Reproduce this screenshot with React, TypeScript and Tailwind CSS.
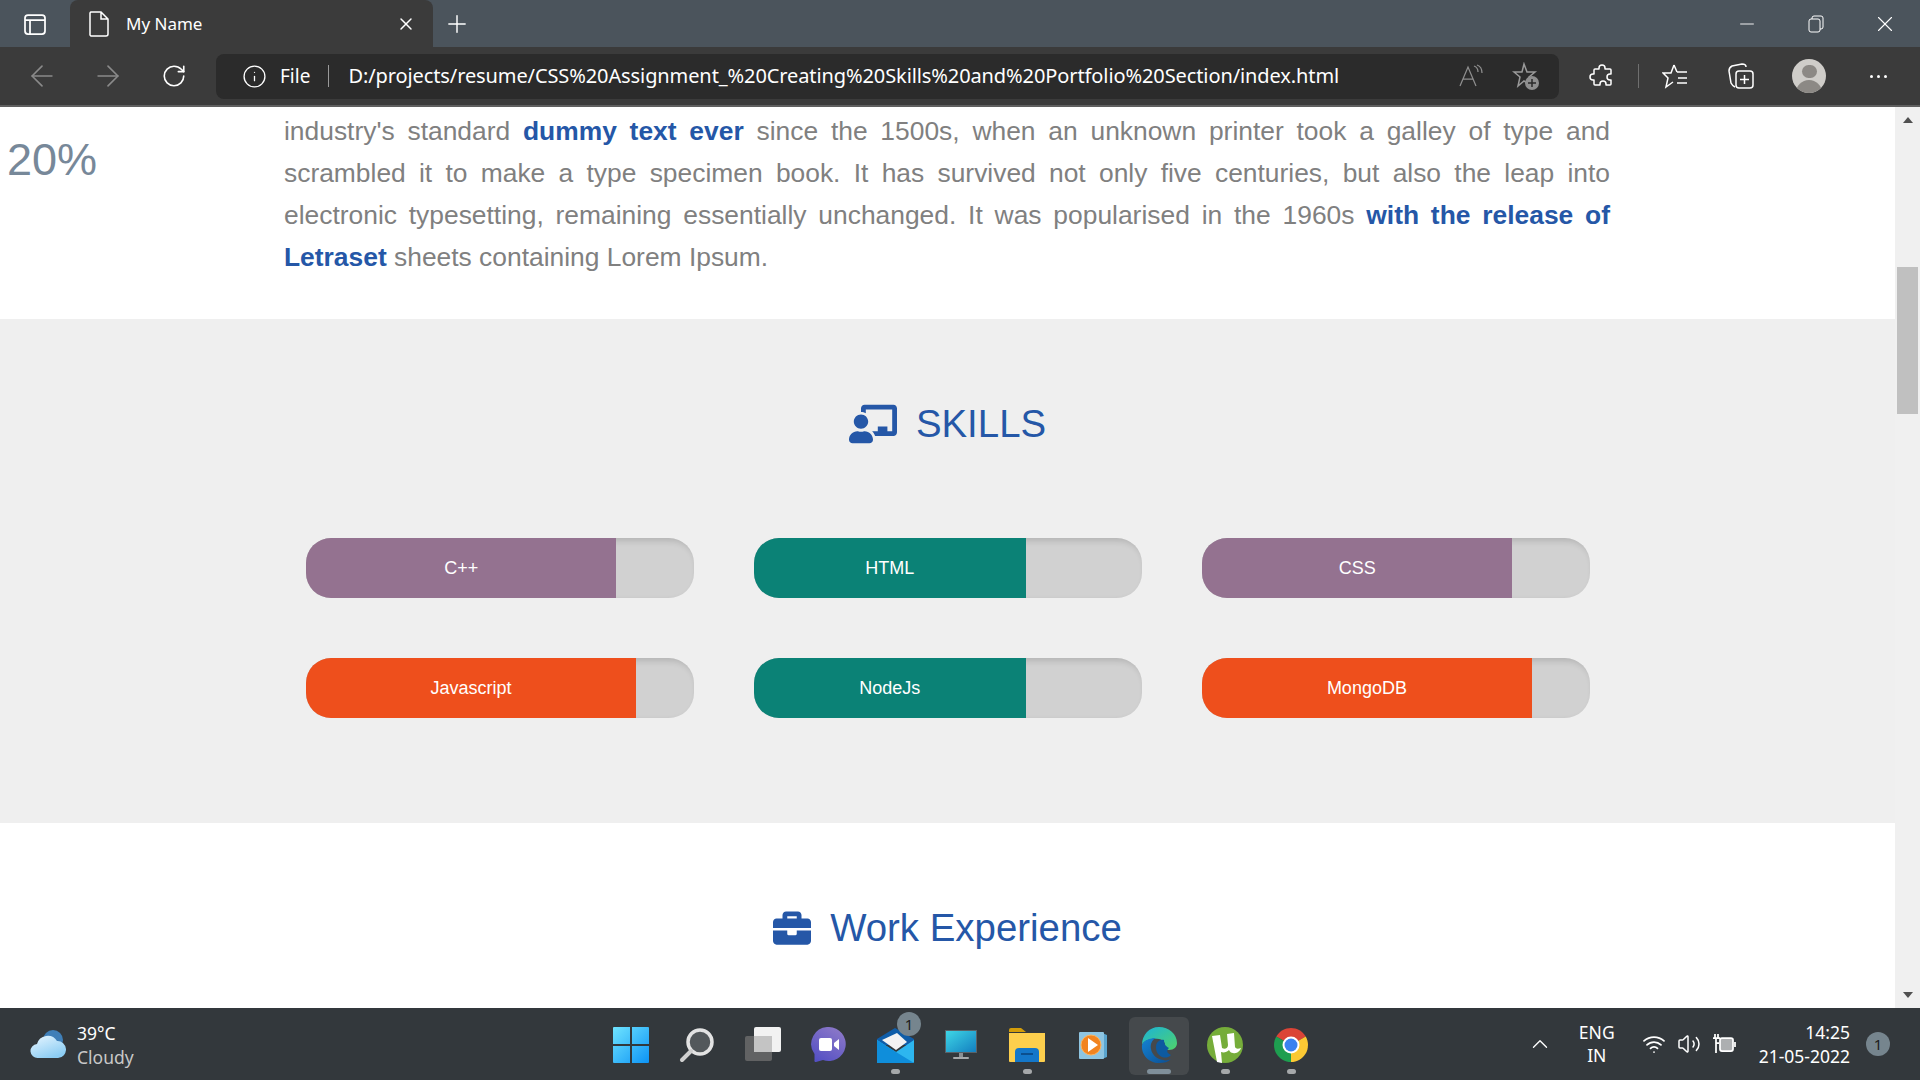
import { ArrowLeft, ArrowRight, RotateCw, Info, Plus, X, Minus, ChevronUp, Volume2, Wifi } from "lucide-react";
import { FaChalkboardTeacher, FaBriefcase } from "react-icons/fa";

const skills = [
  { name: "C++", level: 80, color: "bg-[#947290]" },
  { name: "HTML", level: 70, color: "bg-[#0b8276]" },
  { name: "CSS", level: 80, color: "bg-[#947290]" },
  { name: "Javascript", level: 85, color: "bg-[#ee4f1c]" },
  { name: "NodeJs", level: 70, color: "bg-[#0b8276]" },
  { name: "MongoDB", level: 85, color: "bg-[#ee4f1c]" },
];

function WindowsLogo() {
  return (
    <svg width="36" height="36" viewBox="0 0 36 36">
      <defs>
        <linearGradient id="win" x1="0" y1="0" x2="1" y2="1">
          <stop offset="0" stopColor="#6fe4ff" />
          <stop offset="1" stopColor="#0c93f5" />
        </linearGradient>
      </defs>
      <path d="M1 0h16v17H0V1a1 1 0 0 1 1-1zM19 0h16a1 1 0 0 1 1 1v16H19zM0 19h17v17H1a1 1 0 0 1-1-1zM19 19h17v16a1 1 0 0 1-1 1H19z" fill="url(#win)" />
    </svg>
  );
}

function SearchIcon() {
  return (
    <svg width="36" height="36" viewBox="0 0 36 36">
      <circle cx="21" cy="15" r="12" fill="#53585b" stroke="#e3e3e3" strokeWidth="3.5" />
      <path d="M12 24L3 33" stroke="#d0d0d0" strokeWidth="4" strokeLinecap="round" />
    </svg>
  );
}

function TaskViewIcon() {
  return (
    <svg width="36" height="36" viewBox="0 0 36 36">
      <rect x="9" y="0" width="27" height="25" rx="2" fill="#f2f2f2" />
      <rect x="0" y="9" width="27" height="25" rx="2" fill="#6a6a6a" fillOpacity="0.85" />
      <rect x="9" y="9" width="18" height="16" fill="#c4c4c4" />
    </svg>
  );
}

function ChatIcon() {
  return (
    <svg width="36" height="36" viewBox="0 0 36 36">
      <defs>
        <linearGradient id="chat" x1="0.8" y1="0" x2="0.2" y2="1">
          <stop offset="0" stopColor="#8d79c8" />
          <stop offset="1" stopColor="#5450c4" />
        </linearGradient>
      </defs>
      <path d="M18 0a17 17 0 1 1-6 33l-7 2c-1 0-2-.5-1.500-2V27A17 17 0 0 1 18 0z" fill="url(#chat)" />
      <rect x="8" y="11" width="13" height="13" rx="2" fill="#fff" />
      <path d="M23 16l5-4v11l-5-4z" fill="#fff" />
    </svg>
  );
}

function MailIcon() {
  return (
    <svg width="37" height="36" viewBox="0 0 37 36">
      <path d="M0 12L18 1l19 11v6H0z" fill="#0f5da8" />
      <path d="M5 13l15-7 10 9-11 8z" fill="#f3f3f3" />
      <path d="M0 13l19 12 18-12v22a1 1 0 0 1-1 1H1a1 1 0 0 1-1-1z" fill="#2db6ef" />
      <path d="M19 25l18 11H1a1 1 0 0 1-1-1V13z" fill="#0f8edb" />
    </svg>
  );
}

function MonitorIcon() {
  return (
    <svg width="32" height="30" viewBox="0 0 32 30">
      <defs>
        <linearGradient id="mon" x1="0" y1="0" x2="1" y2="1">
          <stop offset="0" stopColor="#3ed6e6" />
          <stop offset="1" stopColor="#137fc0" />
        </linearGradient>
      </defs>
      <rect x="0" y="0" width="32" height="23" fill="#5a6268" />
      <rect x="1" y="1" width="30" height="21" fill="url(#mon)" />
      <rect x="14" y="23" width="4" height="4" fill="#8b9094" />
      <rect x="8" y="27" width="16" height="2" rx="1" fill="#a6a9ab" />
    </svg>
  );
}

function FolderIcon() {
  return (
    <svg width="36" height="34" viewBox="0 0 36 34">
      <path d="M0 2a2 2 0 0 1 2-2h10l5 4h-17z" fill="#d39d0a" />
      <path d="M0 5h36v28a1 1 0 0 1-1 1H1a1 1 0 0 1-1-1z" fill="#fdcf4d" />
      <path d="M6 34V24a4 4 0 0 1 4-4h16a4 4 0 0 1 4 4v10z" fill="#1477c9" />
      <rect x="12" y="25" width="12" height="2" fill="#0b4f8e" />
    </svg>
  );
}

function MediaIcon() {
  return (
    <svg width="30" height="30" viewBox="0 0 30 30">
      <path d="M24 3l5 2v22l-5 2z" fill="#5aa5cf" />
      <rect x="1" y="2" width="25" height="27" rx="1" fill="#8ec5e2" />
      <circle cx="13" cy="15" r="10" fill="#f28420" />
      <circle cx="13" cy="15" r="10" fill="none" stroke="#fbb45f" strokeWidth="1" />
      <path d="M10 8l10 7-10 7z" fill="#fff" />
    </svg>
  );
}

function EdgeIcon() {
  return (
    <svg width="36" height="36" viewBox="0 0 36 36">
      <defs>
        <linearGradient id="edgeA" x1="0" y1="0" x2="1" y2="1">
          <stop offset="0" stopColor="#1bb3d8" />
          <stop offset="1" stopColor="#50d36a" />
        </linearGradient>
        <linearGradient id="edgeB" x1="0" y1="0" x2="1" y2="1">
          <stop offset="0" stopColor="#1483d4" />
          <stop offset="1" stopColor="#0c4f93" />
        </linearGradient>
      </defs>
      <path d="M18 0c10 0 18 7 18 16 0 4-3 7-8 7-3 0-5-1-5-3 2-2 1-7-5-8C10 11 3 13 1 18 1 8 8 0 18 0z" fill="url(#edgeA)" />
      <path d="M1 18c2-5 8-7 14-7-4 2-6 6-5 11 1 6 6 10 12 11 3 1 6 0 8-1-3 3-7 4-12 4C8 36 0 28 1 18z" fill="url(#edgeB)" />
      <path d="M15 20c0-5 4-8 8-7 0 3 1 6 5 8-3 3-2 5 2 7-3 3-6 3-9 2-4-2-6-5-6-10z" fill="#0d5aa0" />
    </svg>
  );
}

function TorrentIcon() {
  return (
    <svg width="36" height="36" viewBox="0 0 36 36">
      <circle cx="18" cy="18" r="18" fill="#76ad3a" />
      <path d="M5 9l8-1 2 13c3 2 6 0 6-3l-1-11 7-1 1 14c1 2 3 2 6 1-1 3-4 6-8 5-2 0-3-1-4-3-2 2-5 3-8 2l1 11-5-1z" fill="#fff" />
    </svg>
  );
}

function ChromeIcon() {
  return (
    <svg width="34" height="34" viewBox="0 0 34 34">
      <path d="M17 17L2.300 8.500A17 17 0 0 1 31.700 8.500z" fill="#db4437" />
      <path d="M17 17L31.700 8.500A17 17 0 0 1 17 34z" fill="#fcc934" />
      <path d="M17 17L17 34A17 17 0 0 1 2.300 8.500z" fill="#1e9e50" />
      <circle cx="17" cy="17" r="8.500" fill="#fff" />
      <circle cx="17" cy="17" r="6.500" fill="#3b82f0" />
    </svg>
  );
}

const taskIcons = [
  { id: "start", icon: <WindowsLogo /> },
  { id: "search", icon: <SearchIcon /> },
  { id: "tasks", icon: <TaskViewIcon /> },
  { id: "chat", icon: <ChatIcon /> },
  { id: "mail", icon: <MailIcon />, dot: true, badge: true },
  { id: "monitor", icon: <MonitorIcon /> },
  { id: "folder", icon: <FolderIcon />, dot: true },
  { id: "media", icon: <MediaIcon /> },
  { id: "edge", icon: <EdgeIcon />, active: true },
  { id: "torrent", icon: <TorrentIcon />, dot: true },
  { id: "chrome", icon: <ChromeIcon />, dot: true },
];

function SkillBar({ name, level, color }: { name: string; level: number; color: string }) {
  return (
    <div className="h-[60px] rounded-[25px] bg-[#d1d1d1] overflow-hidden shadow-[inset_3px_3px_6px_rgba(0,0,0,0.14)]">
      <div
        className={`h-full flex items-center justify-center text-white text-[18px] ${color}`}
        style={{ width: `${level}%` }}
      >
        {name}
      </div>
    </div>
  );
}

export default function App() {
  return (
    <div className="w-[1920px] h-[1080px] overflow-hidden flex flex-col font-['Liberation_Sans',Arial,sans-serif] bg-white">
      {/* Tab strip */}
      <div className="h-[47px] flex-shrink-0 bg-[#4b545c] flex items-stretch text-white font-['Noto_Sans',sans-serif]">
        <div className="w-[70px] flex items-center justify-center">
          <svg width="24" height="24" viewBox="0 0 24 24" fill="none" stroke="#fff" strokeWidth="1.750">
            <rect x="2" y="3" width="20" height="19" rx="3" />
            <path d="M2 8h20M7 8v14" />
          </svg>
        </div>
        <div className="w-[363px] bg-[#3b3b3b] rounded-t-lg flex items-center pl-[18px] pr-[17px]">
          <svg width="22" height="26" viewBox="0 0 22 26" fill="none" stroke="#fff" strokeWidth="1.500">
            <path d="M3 1h10l7 7v15a2 2 0 0 1-2 2H3a2 2 0 0 1-1-1V2a2 2 0 0 1 1-1zM13 1v7h7" />
          </svg>
          <span className="ml-[16px] text-[17px] flex-1">My Name</span>
          <X size={20} strokeWidth={1.75} />
        </div>
        <div className="w-[48px] flex items-center justify-center">
          <Plus size={28} strokeWidth={1.25} />
        </div>
        <div className="flex-1" />
        <div className="flex items-center">
          <div className="w-[69px] flex justify-center"><Minus size={22} strokeWidth={1} /></div>
          <div className="w-[69px] flex justify-center">
            <svg width="16" height="18" viewBox="0 0 16 18" fill="none" stroke="#fff" strokeWidth="1">
              <rect x="1" y="4" width="11" height="13" rx="2" />
              <path d="M4 4V3a2 2 0 0 1 2-2h7a2 2 0 0 1 2 2v9a2 2 0 0 1-2 2h-1" />
            </svg>
          </div>
          <div className="w-[70px] flex justify-center"><X size={26} strokeWidth={1} /></div>
        </div>
      </div>

      {/* Toolbar */}
      <div className="h-[58px] flex-shrink-0 bg-[#3b3b3b] flex items-center text-white font-['Noto_Sans',sans-serif] border-b-2 border-[#5f5f5f] box-content">
        <div className="w-[83px] flex justify-center text-[#8a8a8a]"><ArrowLeft size={34} strokeWidth={1.15} /></div>
        <div className="w-[50px] flex justify-center text-[#8a8a8a]"><ArrowRight size={34} strokeWidth={1.15} /></div>
        <div className="w-[82px] flex justify-center"><RotateCw size={26} strokeWidth={1.5} /></div>
        <div className="ml-px w-[1343px] h-[45px] bg-[#2b2b2b] rounded-lg flex items-center pl-[26px] pr-[19px]">
          <Info size={25} strokeWidth={1.25} />
          <span className="ml-[13px] text-[19px]">File</span>
          <span className="ml-[18px] w-px h-[22px] bg-[#9a9a9a]" />
          <span className="ml-[19px] text-[20px] tracking-[-0.1px] flex-1 whitespace-nowrap">D:/projects/resume/CSS%20Assignment_%20Creating%20Skills%20and%20Portfolio%20Section/index.html</span>
          <svg width="26" height="24" viewBox="0 0 26 24" fill="none" stroke="#8f8f8f" strokeWidth="1.250">
            <path d="M1 22L9 3l8 19M4 15h10M15 2c3 1 4 3 4 6M18 1c3 1 5 4 5 8" />
          </svg>
          <svg className="ml-[27px]" width="28" height="28" viewBox="0 0 28 28" fill="none">
            <path d="M12 2l3 8h8l-6 5 2 9-7-5-6 5 2-9-6-5h8z" stroke="#9a9a9a" strokeWidth="1.500" />
            <circle cx="20" cy="21" r="7" fill="#8f8f8f" />
            <path d="M20 17v8M16 21h8" stroke="#2b2b2b" strokeWidth="1.500" />
          </svg>
        </div>
        <div className="w-[43px] ml-[21px] flex justify-center">
          <svg width="26" height="26" viewBox="0 0 26 26" fill="none" stroke="#fff" strokeWidth="1.500" strokeLinejoin="round">
            <path d="M10 5a3 3 0 0 1 6 0v1h5a1 1 0 0 1 1 1v4h-1a3 3 0 0 0 0 6h1v4a1 1 0 0 1-1 1h-4v-1a3 3 0 0 0-6 0v1H6a1 1 0 0 1-1-1v-4H4a3 3 0 0 1 0-6h1V7a1 1 0 0 1 1-1h4z" />
          </svg>
        </div>
        <span className="ml-[15px] w-px h-[24px] bg-[#6f6f6f]" />
        <div className="ml-[18px] w-[36px] flex justify-center">
          <svg width="26" height="26" viewBox="0 0 26 26" fill="none" stroke="#fff" strokeWidth="1.500">
            <path d="M12 2l-3 8H1l5 5-2 9 7-5M12 2l3 7M15 9h10M16 15h9M15 20h10" />
          </svg>
        </div>
        <div className="ml-[30px] w-[36px] flex justify-center">
          <svg width="26" height="28" viewBox="0 0 26 28" fill="none" stroke="#fff" strokeWidth="1.500">
            <path d="M7 25c-2-1-3-2-4-4L1 9c0-3 1-4 3-5l10-2c2 0 4 1 4 3" />
            <rect x="8" y="9" width="17" height="17" rx="3" />
            <path d="M16.500 13v9M12 17.500h9" />
          </svg>
        </div>
        <div className="ml-[33px] w-[34px] h-[34px] rounded-full bg-[#cfcdc9] overflow-hidden flex flex-col items-center">
          <div className="mt-[6px] w-[15px] h-[15px] rounded-full bg-[#8c8985]" />
          <div className="mt-[2px] w-[26px] h-[16px] rounded-t-full bg-[#8c8985]" />
        </div>
        <div className="ml-[44px] flex gap-[4px]">
          <span className="w-[3px] h-[3px] rounded-full bg-white" />
          <span className="w-[3px] h-[3px] rounded-full bg-white" />
          <span className="w-[3px] h-[3px] rounded-full bg-white" />
        </div>
      </div>

      {/* Page */}
      <div className="h-[901px] flex-shrink-0 flex overflow-hidden">
        <main className="flex-1 min-w-0">
          <section className="h-[212px] flex items-start">
            <div className="w-[284px] pl-[7px] pt-[26px] text-[45px] leading-[53px] text-[#778899]">20%</div>
            <p className="w-[1326px] mt-[3px] text-[26.4px] leading-[42px] text-[#808080] text-justify">
              industry's standard <b className="text-[#2557a7]">dummy text ever</b> since the 1500s, when an unknown printer took a galley of type and scrambled it to make a type specimen book. It has survived not only five centuries, but also the leap into electronic typesetting, remaining essentially unchanged. It was popularised in the 1960s <b className="text-[#2557a7]">with the release of Letraset</b> sheets containing Lorem Ipsum.
            </p>
          </section>

          <section className="h-[504px] bg-[#efefef] pt-[81px]">
            <h2 className="flex items-center justify-center gap-[19px] text-[38.4px] leading-[44px] text-[#2557a7]">
              <FaChalkboardTeacher size={48} />
              SKILLS
            </h2>
            <div className="mt-[90px] ml-[306px] w-[1284px] grid grid-cols-3 gap-x-[60px] gap-y-[60px]">
              {skills.map((skill) => (
                <SkillBar key={skill.name} {...skill} />
              ))}
            </div>
          </section>

          <section className="pt-[83px]">
            <h2 className="flex items-center justify-center gap-[19px] text-[38.4px] leading-[44px] text-[#2557a7]">
              <FaBriefcase size={38} />
              Work Experience
            </h2>
          </section>
        </main>

        {/* Scrollbar */}
        <div className="w-[25px] flex-shrink-0 bg-[#f0f0f0] flex flex-col items-center justify-between py-[10px]">
          <div className="w-0 h-0 border-x-[5px] border-x-transparent border-b-[6px] border-b-[#505050]" />
          <div className="w-[21px] h-[147px] bg-[#c0c0c0] mt-[-1px] mb-[auto] translate-y-[145px]" />
          <div className="w-0 h-0 border-x-[5px] border-x-transparent border-t-[6px] border-t-[#505050]" />
        </div>
      </div>

      {/* Taskbar */}
      <footer className="flex-1 bg-[#33383c] flex items-center text-white font-['Noto_Sans',sans-serif]">
        <div className="w-[598px] flex-shrink-0 flex items-center pl-[30px]">
          <svg width="36" height="30" viewBox="0 0 36 30">
            <defs>
              <linearGradient id="cloud" x1="0" y1="0" x2="0.6" y2="1">
                <stop offset="0" stopColor="#e8f6ff" />
                <stop offset="1" stopColor="#8ccdf4" />
              </linearGradient>
            </defs>
            <circle cx="23" cy="11" r="10" fill="#3f7fb8" />
            <path d="M8 29a7 7 0 0 1-1-14 11 11 0 0 1 20-3 8.500 8.500 0 0 1 1 17z" fill="url(#cloud)" />
          </svg>
          <div className="ml-[11px] text-[17.5px] leading-[24px] mt-[1px]">
            <div>39°C</div>
            <div className="text-[#c8c8c8]">Cloudy</div>
          </div>
        </div>

        <div className="flex items-center">
          {taskIcons.map((item) => (
            <div
              key={item.id}
              className="relative w-[66px] h-[66px] mt-[4px] pb-[3px] flex items-center justify-center"
            >
              {item.active && <span className="absolute left-[3px] top-[4px] w-[60px] h-[58px] rounded-md bg-[#45494c]" />}
              <span className="relative flex">{item.icon}</span>
              {item.badge && (
                <span className="absolute top-[-1px] right-[7px] w-[24px] h-[24px] rounded-full bg-[#76858e] text-[#1c1c1c] text-[15px] flex items-center justify-center">1</span>
              )}
              {item.dot && <span className="absolute bottom-[5px] left-[29px] w-[9px] h-[5px] rounded-full bg-[#a5a8aa]" />}
              {item.active && <span className="absolute bottom-[5px] left-[21px] w-[24px] h-[5px] rounded-full bg-[#7f8f9a]" />}
            </div>
          ))}
        </div>

        <div className="flex-1 flex items-center justify-end">
          <ChevronUp size={26} strokeWidth={1.25} />
          <div className="ml-[26px] text-[17.5px] leading-[23px] text-center">
            <div>ENG</div>
            <div>IN</div>
          </div>
          <Wifi className="ml-[27px]" size={24} strokeWidth={1.75} />
          <Volume2 className="ml-[11px]" size={24} strokeWidth={1.5} />
          <svg className="ml-[11px]" width="24" height="22" viewBox="0 0 24 22" fill="none" stroke="#fff" strokeWidth="1.750">
            <path d="M1 5h7M3 1v4M6 1v4M4 5v5h3M4 10v10" />
            <rect x="8" y="5" width="13" height="13" rx="2" fill="#fff" fillOpacity="0.6" />
            <path d="M23 9v5" />
          </svg>
          <div className="ml-[23px] text-[17.5px] leading-[24px] text-right">
            <div>14:25</div>
            <div>21-05-2022</div>
          </div>
          <div className="ml-[16px] mr-[30px] w-[24px] h-[24px] rounded-full bg-[#76858e] text-[#1c1c1c] text-[15px] flex items-center justify-center">1</div>
        </div>
      </footer>
    </div>
  );
}
